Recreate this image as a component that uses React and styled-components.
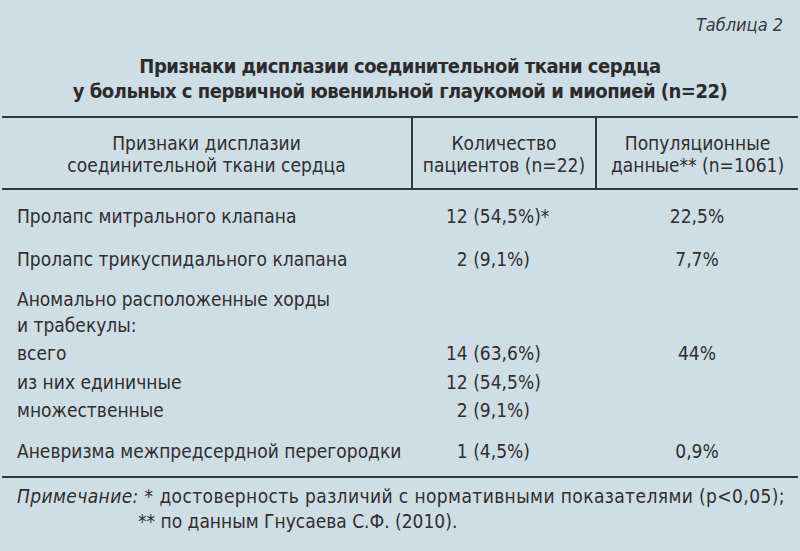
import React from 'react';
import styled, { createGlobalStyle } from 'styled-components';

const GlobalStyle = createGlobalStyle`
  html, body {
    margin: 0;
    padding: 0;
    background: #cfdde5;
  }
`;

const FS = '\u2007';

const rows = [
  { label: 'Пролапс митрального клапана', count: '12 (54,5%)*', pop: '22,5%', gap: 12 },
  { label: 'Пролапс трикуспидального клапана', count: FS + '2 (9,1%)', pop: '7,7%', gap: 15 },
  { label: 'Аномально расположенные хорды\nи трабекулы:', count: '', pop: '', gap: 13, tall: true },
  { label: 'всего', count: '14 (63,6%)', pop: '44%', gap: 1 },
  { label: 'из них единичные', count: '12 (54,5%)', pop: '', gap: 1 },
  { label: 'множественные', count: FS + '2 (9,1%)', pop: '', gap: 0 },
  { label: 'Аневризма межпредсердной перегородки', count: FS + '1 (4,5%)', pop: '0,9%', gap: 13, last: true },
];

const App = () => {
  return (
    <Page>
      <GlobalStyle />
      <Caption>Таблица 2</Caption>
      <Title>
        Признаки дисплазии соединительной ткани сердца
        <br />
        у больных с первичной ювенильной глаукомой и миопией (n=22)
      </Title>
      <Table>
        <colgroup>
          <col style={{ width: 410 }} />
          <col style={{ width: 184 }} />
          <col />
        </colgroup>
        <thead>
          <tr>
            <HeadCell>
              Признаки дисплазии
              <br />
              соединительной ткани сердца
            </HeadCell>
            <HeadCell $bordered>
              Количество
              <br />
              пациентов (n=22)
            </HeadCell>
            <HeadCell $bordered>
              Популяционные
              <br />
              данные** (n=1061)
            </HeadCell>
          </tr>
        </thead>
        <tbody>
          {rows.map((r, i) => (
            <tr key={i}>
              <LabelCell $gap={r.gap} $last={r.last} $tall={r.tall}>
                {r.label.split('\n').map((l, j) => (
                  <div key={j}>{l}</div>
                ))}
              </LabelCell>
              <ValueCell $gap={r.gap} $last={r.last}>{r.count}</ValueCell>
              <ValueCell $gap={r.gap} $last={r.last} $pop>{r.pop}</ValueCell>
            </tr>
          ))}
        </tbody>
      </Table>
      <Note>
        <NoteLine $wide>
          <em>Примечание:</em> * достоверность различий с нормативными показателями (p&lt;0,05);
        </NoteLine>
        <NoteLine $indent>** по данным Гнусаева С.Ф. (2010).</NoteLine>
      </Note>
    </Page>
  );
};

export default App;

const Page = styled.div`
  width: 800px;
  height: 551px;
  box-sizing: border-box;
  padding: 12px 2px 0 2px;
  color: #2d2f31;
  font-family: "Liberation Sans Narrow", "DejaVu Sans Condensed", "Liberation Sans", sans-serif;
  font-size: 19px;
  overflow: hidden;
`;

const Caption = styled.div`
  text-align: right;
  font-style: italic;
  font-size: 18px;
  line-height: 26px;
  padding-right: 15px;
  color: #383a3c;
`;

const Title = styled.div`
  margin-top: 16px;
  text-align: center;
  font-weight: bold;
  font-size: 20px;
  letter-spacing: -0.5px;
  line-height: 25px;
  color: #2a2c2e;
`;

const Table = styled.table`
  margin-top: 12px;
  width: 796px;
  border-collapse: collapse;
  table-layout: fixed;
  border-top: 2px solid #2f3a40;
  border-bottom: 2px solid #2f3a40;
`;

const HeadCell = styled.th`
  font-weight: normal;
  text-align: center;
  line-height: 22px;
  padding: 14px 0 12px;
  border-bottom: 2px solid #2f3a40;
  border-left: ${(p) => (p.$bordered ? '2px solid #2f3a40' : 'none')};
`;

const LabelCell = styled.td`
  padding: ${(p) => p.$gap}px 0 ${(p) => (p.$last ? 11 : 0)}px 15px;
  line-height: ${(p) => (p.$tall ? 26 : 28)}px;
  white-space: nowrap;
  vertical-align: top;
`;

const ValueCell = styled.td`
  padding: ${(p) => p.$gap}px 0 ${(p) => (p.$last ? 11 : 0)}px ${(p) => (p.$pop ? 0 : 34)}px;
  line-height: 28px;
  text-align: ${(p) => (p.$pop ? 'center' : 'left')};
  vertical-align: bottom;
  white-space: pre;
`;

const Note = styled.div`
  padding: 6px 0 0 15px;
  line-height: 25px;
`;

const NoteLine = styled.div`
  padding-left: ${(p) => (p.$indent ? '121px' : '0')};
  letter-spacing: ${(p) => (p.$wide ? '0.4px' : '0')};
  white-space: nowrap;

  em {
    font-style: italic;
  }
`;
